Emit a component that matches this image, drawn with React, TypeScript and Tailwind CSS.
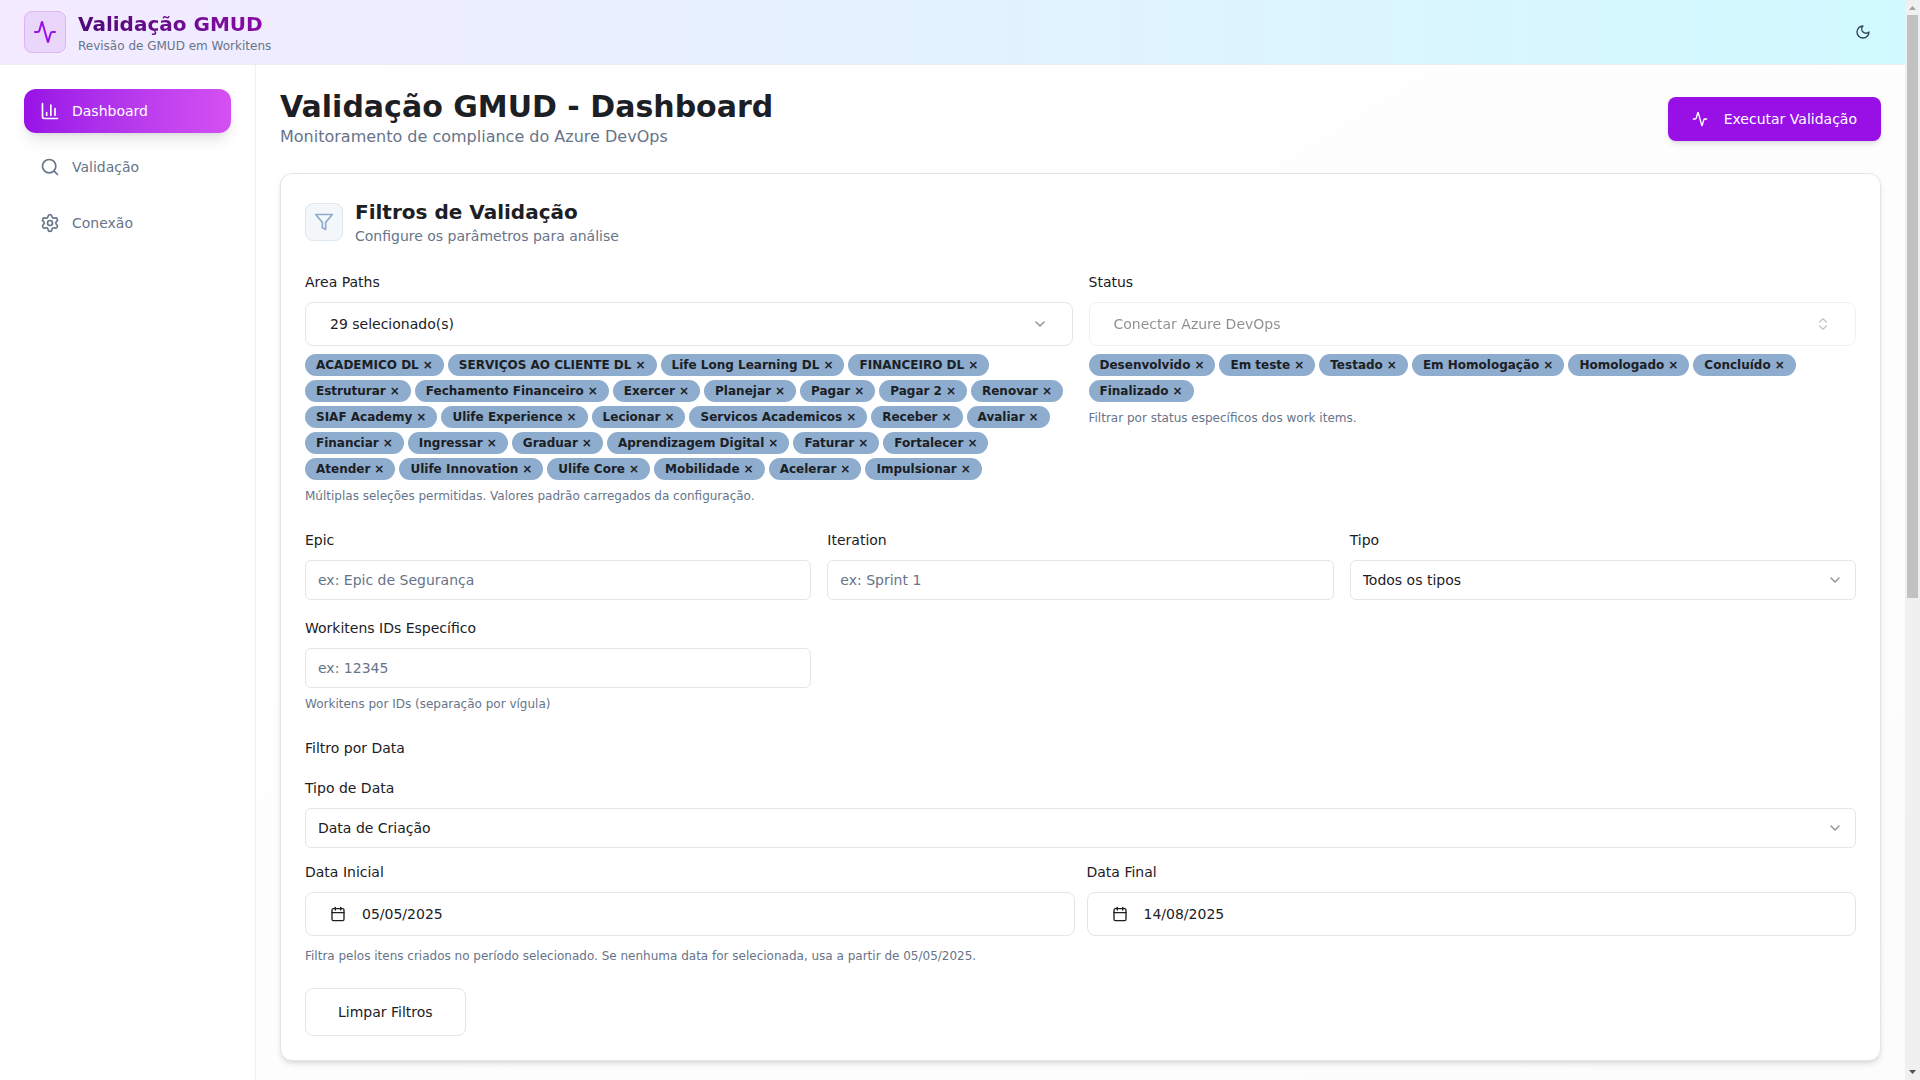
import type { ButtonHTMLAttributes, ReactNode } from "react"
import { Activity, Calendar, ChartColumn, ChevronDown, ChevronsUpDown, Search, Settings } from "lucide-react"

const navItems = [
  { label: "Dashboard", icon: ChartColumn, active: true },
  { label: "Validação", icon: Search, active: false },
  { label: "Conexão", icon: Settings, active: false },
]

const areaPaths = [
  "ACADEMICO DL",
  "SERVIÇOS AO CLIENTE DL",
  "Life Long Learning DL",
  "FINANCEIRO DL",
  "Estruturar",
  "Fechamento Financeiro",
  "Exercer",
  "Planejar",
  "Pagar",
  "Pagar 2",
  "Renovar",
  "SIAF Academy",
  "Ulife Experience",
  "Lecionar",
  "Servicos Academicos",
  "Receber",
  "Avaliar",
  "Financiar",
  "Ingressar",
  "Graduar",
  "Aprendizagem Digital",
  "Faturar",
  "Fortalecer",
  "Atender",
  "Ulife Innovation",
  "Ulife Core",
  "Mobilidade",
  "Acelerar",
  "Impulsionar",
]

const statuses = ["Desenvolvido", "Em teste", "Testado", "Em Homologação", "Homologado", "Concluído", "Finalizado"]

function FilterIcon({ className }: { className: string }) {
  return (
    <svg viewBox="0 0 24 24" fill="none" stroke="currentColor" strokeWidth="2" strokeLinecap="round" strokeLinejoin="round" className={className}>
      <polygon points="22 3 2 3 10 12.46 10 19 14 21 14 12.46 22 3" />
    </svg>
  )
}

function MoonIcon({ className }: { className: string }) {
  return (
    <svg viewBox="0 0 24 24" fill="none" stroke="currentColor" strokeWidth="2" strokeLinecap="round" strokeLinejoin="round" className={className}>
      <path d="M12 3a6 6 0 0 0 9 9 9 9 0 1 1-9-9Z" />
    </svg>
  )
}

function Field({ id, label, hint, children }: { id: string; label: string; hint?: string; children: ReactNode }) {
  return (
    <div className="flex flex-col gap-2">
      <label htmlFor={id} className="text-sm/6 font-medium">
        {label}
      </label>
      {children}
      {hint && <p className="text-xs text-[#677489]">{hint}</p>}
    </div>
  )
}

function TextInput({ id, placeholder }: { id: string; placeholder: string }) {
  return (
    <input
      id={id}
      type="text"
      placeholder={placeholder}
      className="h-10 w-full rounded-md border border-[#e4e5e9] bg-white px-3 text-sm placeholder:text-[#677489]"
    />
  )
}

function SelectInput({ id, options }: { id: string; options: string[] }) {
  return (
    <div className="relative">
      <select id={id} className="h-10 w-full appearance-none rounded-md border border-[#e4e5e9] bg-white px-3 text-sm">
        {options.map((option) => (
          <option key={option}>{option}</option>
        ))}
      </select>
      <ChevronDown className="pointer-events-none absolute top-3 right-[13px] size-4 opacity-50" />
    </div>
  )
}

function OutlineButton({ children, ...props }: ButtonHTMLAttributes<HTMLButtonElement>) {
  return (
    <button
      type="button"
      className="flex h-11 w-full items-center rounded-lg border border-[#e4e5e9] bg-white px-6 text-sm font-medium disabled:opacity-50"
      {...props}
    >
      {children}
    </button>
  )
}

function Chips({ items }: { items: string[] }) {
  return (
    <div className="flex flex-wrap gap-1">
      {items.map((item) => (
        <span
          key={item}
          className="inline-flex items-center gap-1 rounded-full border border-transparent bg-[#8dacce] px-2.5 py-0.5 text-xs font-semibold"
        >
          {item}
          <button type="button" aria-label={`Remover ${item}`}>
            ×
          </button>
        </span>
      ))}
    </div>
  )
}

function Header() {
  return (
    <header className="flex h-[65px] items-center justify-between border-b border-[#ebecf0] bg-linear-to-r from-[#f4eaff] to-[#d0faff] px-6">
      <div className="flex items-center gap-3">
        <div className="rounded-lg border border-[#dbb3f5] bg-[#ead5fb] p-2">
          <Activity className="size-6 text-[#9810e6]" />
        </div>
        <div>
          <p className="bg-linear-to-r from-[#4f0a78] to-[#8a0ba8] bg-clip-text text-xl font-bold text-transparent">Validação GMUD</p>
          <p className="text-xs text-[#677489]">Revisão de GMUD em Workitens</p>
        </div>
      </div>
      <button type="button" aria-label="Alternar tema" className="flex size-9 items-center justify-center rounded-lg text-[#334155]">
        <MoonIcon className="size-4" />
      </button>
    </header>
  )
}

function Sidebar() {
  return (
    <nav className="flex w-64 shrink-0 flex-col gap-3 border-r border-[#f0f0f3] bg-white p-6">
      {navItems.map(({ label, icon: Icon, active }) => (
        <a
          key={label}
          href="#"
          className={
            active
              ? "flex items-center gap-3 rounded-xl bg-linear-to-r from-[#9810e6] to-[#d550f2] px-4 py-3 text-sm font-medium text-white shadow-lg"
              : "flex items-center gap-3 rounded-xl px-4 py-3 text-sm font-medium text-[#677489]"
          }
        >
          <Icon className="size-5" />
          {label}
        </a>
      ))}
    </nav>
  )
}

function FiltersCard() {
  return (
    <section className="flex flex-col gap-6 rounded-xl border border-[#e4e5e9] bg-white p-6 shadow-md">
      <div className="flex items-center gap-3">
        <div className="rounded-lg border border-[#dde7f0] bg-[#f3f7fa] p-2">
          <FilterIcon className="size-5 text-[#8dacce]" />
        </div>
        <div>
          <h2 className="text-xl font-semibold">Filtros de Validação</h2>
          <p className="text-sm text-[#677489]">Configure os parâmetros para análise</p>
        </div>
      </div>

      <div className="grid grid-cols-2 items-start gap-4">
        <Field id="area-paths" label="Area Paths" hint="Múltiplas seleções permitidas. Valores padrão carregados da configuração.">
          <OutlineButton id="area-paths">
            29 selecionado(s)
            <ChevronDown className="ml-auto size-4 opacity-50" />
          </OutlineButton>
          <Chips items={areaPaths} />
        </Field>
        <Field id="status" label="Status" hint="Filtrar por status específicos dos work items.">
          <OutlineButton id="status" disabled>
            Conectar Azure DevOps
            <ChevronsUpDown className="ml-auto size-4 opacity-50" />
          </OutlineButton>
          <Chips items={statuses} />
        </Field>
      </div>

      <div className="grid grid-cols-3 items-start gap-4">
        <Field id="epic" label="Epic">
          <TextInput id="epic" placeholder="ex: Epic de Segurança" />
        </Field>
        <Field id="iteration" label="Iteration">
          <TextInput id="iteration" placeholder="ex: Sprint 1" />
        </Field>
        <Field id="tipo" label="Tipo">
          <SelectInput id="tipo" options={["Todos os tipos"]} />
        </Field>
        <Field id="ids" label="Workitens IDs Específico" hint="Workitens por IDs (separação por vígula)">
          <TextInput id="ids" placeholder="ex: 12345" />
        </Field>
      </div>

      <div>
        <h3 className="mb-4 text-sm/6 font-medium">Filtro por Data</h3>
        <div className="flex flex-col gap-3">
          <Field id="tipo-data" label="Tipo de Data">
            <SelectInput id="tipo-data" options={["Data de Criação"]} />
          </Field>
          <div className="grid grid-cols-2 gap-3">
            <Field id="data-inicial" label="Data Inicial">
              <OutlineButton id="data-inicial">
                <Calendar className="mr-4 size-4" />
                05/05/2025
              </OutlineButton>
            </Field>
            <Field id="data-final" label="Data Final">
              <OutlineButton id="data-final">
                <Calendar className="mr-4 size-4" />
                14/08/2025
              </OutlineButton>
            </Field>
          </div>
          <p className="text-xs text-[#677489]">
            Filtra pelos itens criados no período selecionado. Se nenhuma data for selecionada, usa a partir de 05/05/2025.
          </p>
        </div>
      </div>

      <button type="button" className="h-12 self-start rounded-lg border border-[#e4e5e9] bg-white px-8 text-sm font-medium">
        Limpar Filtros
      </button>
    </section>
  )
}

function ScrollTrack() {
  return (
    <div aria-hidden="true" className="sticky top-0 flex h-screen w-[15px] shrink-0 flex-col items-center bg-[#f0f0f0]">
      <svg width="15" height="15" viewBox="0 0 15 15" fill="#a3a3a3">
        <path d="M4 10 L7.5 6 L11 10 Z" />
      </svg>
      <div className="h-[54%] w-[11px] bg-[#c1c1c1]" />
      <svg className="mt-auto" width="15" height="15" viewBox="0 0 15 15" fill="#505050">
        <path d="M4 5 L7.5 9 L11 5 Z" />
      </svg>
    </div>
  )
}

export default function App() {
  return (
    <div className="flex font-['DejaVu_Sans',sans-serif] text-[#1c2024]">
      <div className="flex min-h-screen min-w-0 flex-1 flex-col">
        <Header />
        <div className="flex flex-1">
          <Sidebar />
          <main className="flex min-w-0 flex-1 flex-col gap-6 bg-linear-to-br from-white to-[#fcfcfc] px-6 pt-6">
            <div className="flex items-center justify-between">
              <div>
                <h1 className="text-3xl font-bold">Validação GMUD - Dashboard</h1>
                <p className="text-[#677489]">Monitoramento de compliance do Azure DevOps</p>
              </div>
              <button
                type="button"
                className="flex h-11 items-center gap-4 rounded-lg bg-[#9810e6] px-6 text-sm font-medium text-white shadow-md"
              >
                <Activity className="size-4" />
                Executar Validação
              </button>
            </div>
            <FiltersCard />
          </main>
        </div>
      </div>
      <ScrollTrack />
    </div>
  )
}
